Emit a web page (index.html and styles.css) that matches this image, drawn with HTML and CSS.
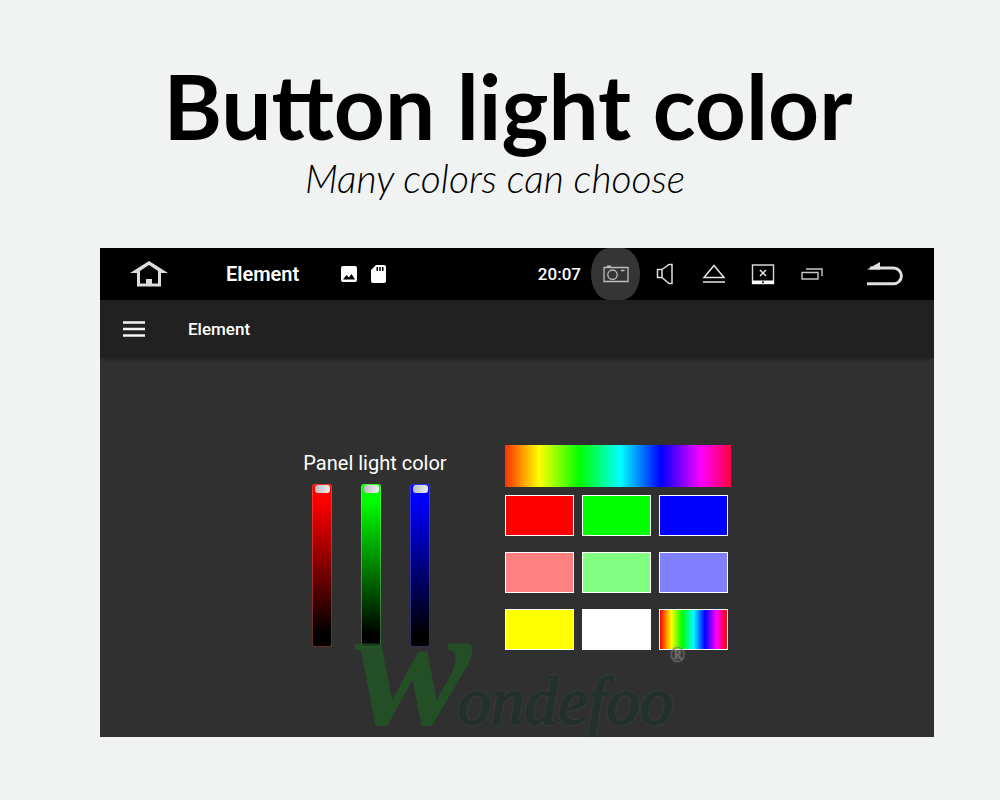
FILE: index.html
```
<!DOCTYPE html>
<html lang="en">
<head>
  <meta charset="UTF-8">
  <meta name="viewport" content="width=device-width, initial-scale=1.0">
  <title>Button light color</title>
  <link rel="stylesheet" href="styles.css">
</head>
<body>
  <header class="intro">
    <h1>Button light color</h1>
    <p>Many colors can choose</p>
  </header>
  <main class="screen">
    <div class="status-bar">
      <button class="home" aria-label="Home">
        <svg width="38" height="26" viewBox="0 0 38 26"><path d="M8.500 10V24H29.500V10" fill="none" stroke="#dcdcdc" stroke-width="3"/><path d="M0 12 19 0 38 12H31L19 4 7 12Z" fill="#dcdcdc"/><path d="M16 18h6v7h-6z" fill="#dcdcdc"/></svg>
      </button>
      <span class="status-title">Element</span>
      <div class="notices">
        <svg width="16" height="16" viewBox="0 0 16 16"><path fill="#fff" fill-rule="evenodd" d="M2 0h12a2 2 0 0 1 2 2v12a2 2 0 0 1-2 2H2a2 2 0 0 1-2-2V2a2 2 0 0 1 2-2ZM2 13.500h12L10.500 8 8 11.500 5.500 9Z"/></svg>
        <svg width="15" height="18" viewBox="0 0 15 18"><path fill="#fff" fill-rule="evenodd" d="M5 0h8a2 2 0 0 1 2 2v14a2 2 0 0 1-2 2H2a2 2 0 0 1-2-2V5ZM5.500 2v4h1.500V2ZM8.300 2v4h1.500V2ZM11 2v4h1.500V2Z"/></svg>
      </div>
      <time class="clock">20:07</time>
      <nav class="actions">
        <button class="active" aria-label="Screenshot">
          <svg width="26" height="18" viewBox="0 0 26 18" fill="none" stroke="#bdbdbd" stroke-width="1.300"><path d="M1 2.500h24v14H1zM4 1.200h4M18 5.500h3.500"/><circle cx="9.500" cy="9.700" r="4.700"/></svg>
        </button>
        <button aria-label="Volume">
          <svg width="18" height="22" viewBox="0 0 18 22" fill="none" stroke="#e0e0e0" stroke-width="1.500"><path d="M1.500 6.500h4.500v8H1.500zM6 6.500 13 1.500H16V20.500H13L6 14.500"/></svg>
        </button>
        <button aria-label="Eject">
          <svg width="24" height="20" viewBox="0 0 24 20" fill="none" stroke="#e6e6e6" stroke-width="1.500"><path d="M12 1.500 22 13.500H2ZM1 18h22"/></svg>
        </button>
        <button aria-label="Screen off">
          <svg width="24" height="21" viewBox="0 0 24 21"><path d="M1.500 1h21v18.500h-21z" fill="none" stroke="#d8d8d8" stroke-width="1.400"/><path d="M1 16.500h22V20H1z" fill="#fff"/><path d="m9 6 6 6m0-6-6 6" fill="none" stroke="#e8e8e8" stroke-width="1.500"/><circle cx="12" cy="18.200" r="1" fill="#000"/></svg>
        </button>
        <button aria-label="Recent apps">
          <svg width="22" height="12" viewBox="0 0 22 12" fill="none" stroke="#c8c8c8" stroke-width="1.400"><path d="M1 4.500h16V11H1zM5 1h16v7"/></svg>
        </button>
      </nav>
      <button class="back" aria-label="Back">
        <svg width="36" height="24" viewBox="0 0 36 24"><path d="M3 6H26.500a7.900 7.900 0 0 1 0 15.800H0" fill="none" stroke="#dedede" stroke-width="3"/><path d="M0 7.500 13 0V7.500Z" fill="#dedede"/></svg>
      </button>
    </div>

    <div class="app-bar">
      <button class="menu" aria-label="Menu">
        <svg width="22" height="16" viewBox="0 0 22 16" stroke="#f4f4f4" stroke-width="2.400"><path d="M0 1.500h22M0 8h22M0 14.500h22"/></svg>
      </button>
      <h2>Element</h2>
    </div>

    <section class="content">
      <div class="panel">
        <h3>Panel light color</h3>
        <div class="sliders">
          <input class="red" type="range" min="0" max="255" value="255" aria-label="Red">
          <input class="green" type="range" min="0" max="255" value="255" aria-label="Green">
          <input class="blue" type="range" min="0" max="255" value="255" aria-label="Blue">
        </div>
      </div>
      <div class="picker">
        <button class="spectrum" aria-label="Spectrum"></button>
        <div class="swatches">
          <button class="swatch red" aria-label="Red"></button>
          <button class="swatch green" aria-label="Green"></button>
          <button class="swatch blue" aria-label="Blue"></button>
          <button class="swatch light-red" aria-label="Light red"></button>
          <button class="swatch light-green" aria-label="Light green"></button>
          <button class="swatch light-blue" aria-label="Light blue"></button>
          <button class="swatch yellow" aria-label="Yellow"></button>
          <button class="swatch white" aria-label="White"></button>
          <button class="swatch rainbow" aria-label="Rainbow"></button>
        </div>
      </div>
    </section>

    <!-- brand mark over the screen -->
    <div class="watermark"><span class="initial">w</span><span class="rest">ondefoo</span><span class="mark">®</span></div>
  </main>
</body>
</html>
```

FILE: styles.css
```
:root {
  --page: #f0f3f2;
  --bar: #212121;
  --surface: #303030;
}
* { box-sizing: border-box; }
body {
  margin: 0;
  background-color: var(--page);
  font-family: Roboto, sans-serif;
  color: #fff;
}
button {
  padding: 0;
  border: none;
  background: none;
  color: inherit;
  display: flex;
  align-items: center;
  justify-content: center;
}
h1, h2, h3, p { margin: 0; }

.intro {
  padding: 56px 0 48px;
  color: #000;
  font-family: Lato, sans-serif;
  text-align: center;
}
.intro h1 { padding-left: 16px; font-size: 89px; font-weight: 700; line-height: 100px; }
.intro p { padding-right: 10px; font-size: 39px; font-weight: 300; font-style: italic; line-height: 44px; }

.screen {
  position: relative;
  margin: 0 6.6% 0 10%;
  background-color: var(--surface);
}
.status-bar {
  display: flex;
  align-items: center;
  height: 52px;
  padding: 0 31px 0 30px;
  background-color: #000;
}
.status-title { margin-left: 58px; font-size: 20px; font-weight: 600; }
.notices { display: flex; align-items: center; gap: 14px; margin-left: 42px; }
.clock { margin-left: auto; margin-right: 10px; font-size: 17px; font-weight: 500; }
.actions { display: flex; height: 100%; }
.actions button { width: 49px; }
.actions .active { background-color: #353535; border-radius: 18px / 26px; }
.back { margin-left: 31px; }

.app-bar {
  display: flex;
  align-items: center;
  height: 58px;
  padding: 0 23px;
  background-color: var(--bar);
  box-shadow: 0 4px 3px -3px rgba(0,0,0,0.5);
}
.app-bar h2 { margin-left: 43px; font-size: 17px; font-weight: 500; }

.content {
  display: flex;
  justify-content: center;
  gap: 58px;
  padding: 87px 0;
}
.panel h3 { padding-top: 6px; font-size: 20px; font-weight: 400; line-height: 24px; }
.sliders { display: flex; gap: 29px; padding: 9px 0 0 9px; }
.sliders input {
  appearance: none;
  writing-mode: vertical-lr;
  direction: rtl;
  width: 20px;
  height: 163px;
  margin: 0;
  border: 1px solid;
  border-radius: 3px;
}
.sliders input::-webkit-slider-thumb {
  appearance: none;
  width: 15px;
  height: 8px;
  border-radius: 3px;
  background: linear-gradient(90deg, #bcbcbc, #eee);
}
.sliders .red { background: linear-gradient(#f00 10%, #000 92%) border-box; border-color: rgba(255,110,110,0.4); }
.sliders .green { background: linear-gradient(#0f0 10%, #000 92%) border-box; border-color: rgba(130,255,130,0.4); }
.sliders .blue { background: linear-gradient(#00f 10%, #000 92%) border-box; border-color: rgba(120,120,255,0.4); }

.spectrum {
  width: 226px;
  height: 42px;
  background: linear-gradient(90deg, #ff3000, #ff0 15%, #0f0 33%, #0ff 51%, #00f 69%, #f0f 87%, #ff0040);
}
.swatches {
  display: grid;
  grid-template-columns: repeat(3, 69px);
  gap: 16px 8px;
  margin-top: 8px;
}
.swatch { height: 41px; border: 1px solid #fff; }
.swatch.red { background-color: #f00; }
.swatch.green { background-color: #0f0; }
.swatch.blue { background-color: #00f; }
.light-red { background-color: #ff8080; }
.light-green { background-color: #80ff80; }
.light-blue { background-color: #8080ff; }
.yellow { background-color: #ff0; }
.white { background-color: #fff; }
.rainbow { background: linear-gradient(90deg, #f00, #ff0 17%, #0f0 33%, #0ff 50%, #00f 67%, #f0f 84%, #f00); }

.watermark {
  position: absolute;
  left: 254px;
  bottom: -16px;
  display: flex;
  align-items: baseline;
  font-family: "Liberation Serif", serif;
  font-style: italic;
  line-height: 1;
  pointer-events: none;
}
.initial { color: rgba(31,92,34,0.7); font-size: 176px; font-weight: 700; }
.rest {
  margin-left: -14px;
  color: #24302a;
  font-size: 67px;
  -webkit-text-stroke: 2px #24302a;
  text-shadow: 0 0 3px #5c645f;
}
.mark {
  position: absolute;
  right: -12px;
  top: 68px;
  color: #777;
  font-size: 20px;
  font-style: normal;
  text-shadow: 0 0 3px #777;
}
```
